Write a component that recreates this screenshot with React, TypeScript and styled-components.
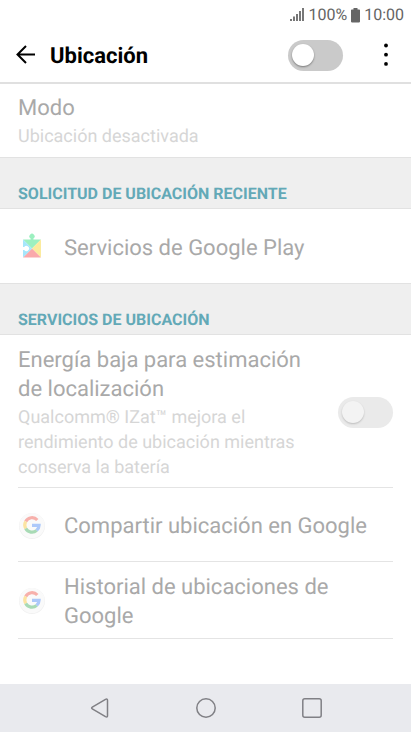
import React from "react";
import styled, { createGlobalStyle } from "styled-components";

const GlobalStyle = createGlobalStyle`
  *, *::before { box-sizing: border-box; }
  body {
    margin: 0;
    background: #fff;
    font-family: Roboto, sans-serif;
    text-rendering: geometricPrecision;
  }
`;

const Screen = styled.div`
  display: flex;
  flex-direction: column;
  min-height: 100vh;
`;

const StatusBar = styled.div`
  display: flex;
  align-items: center;
  justify-content: flex-end;
  gap: 4px;
  height: 28px;
  padding: 2px 7px 0 0;
  font-size: 16px;
  line-height: 26px;
  color: #646464;
`;

const Header = styled.header`
  display: flex;
  align-items: center;
  height: 56px;
  padding: 0 13px;
  border-bottom: 2px solid #e0e0e0;
`;

const IconButton = styled.button`
  display: flex;
  padding: 0;
  border: 0;
  background: none;
  color: ${(p) => p.color ?? "#000"};
`;

const Title = styled.h1`
  flex: 1;
  margin: 0 0 0 13px;
  padding-top: 4px;
  font-size: 22px;
  line-height: 28px;
  font-weight: 700;
  color: #000;
`;

const Switch = styled.input.attrs({ type: "checkbox", role: "switch" })`
  appearance: none;
  display: flex;
  flex: none;
  align-items: center;
  width: 55px;
  height: 31px;
  margin: 0;
  padding: 0 4px;
  border-radius: 16px;
  background: #cacaca;

  &::before {
    content: "";
    width: 22px;
    height: 22px;
    border-radius: 50%;
    background: #fff;
    box-shadow: 0 1px 2px rgba(0, 0, 0, 0.4);
  }

  &:checked {
    justify-content: flex-end;
  }

  &:disabled {
    background: #eaeaea;
  }

  &:disabled::before {
    background: #f3f3f3;
    box-shadow: 0 1px 2px rgba(0, 0, 0, 0.2);
  }
`;

const MenuButton = styled(IconButton)`
  margin-left: 31px;
`;

const SectionTitle = styled.h2`
  margin: 0;
  padding: 24px 18px 3px;
  border: solid #e2e2e2;
  border-width: 1px 0;
  background: #efefef;
  font-size: 16px;
  line-height: 23px;
  font-weight: 700;
  color: #63a9b7;
`;

const List = styled.div`
  padding: 0 18px;
`;

const Row = styled.div<{ $divided?: boolean; $compact?: boolean }>`
  display: flex;
  align-items: center;
  min-height: ${(p) => (p.$compact ? "0" : "74px")};
  padding: ${(p) => (p.$compact ? "8px 0" : "9px 0 7px")};
  border-bottom: ${(p) => (p.$divided ? "1px solid #e4e4e4" : "0")};
`;

const RowIcon = styled.span`
  display: flex;
  flex: none;
  width: 46px;
`;

const RowText = styled.div`
  flex: 1;
  min-width: 0;
  padding-top: 2px;
`;

const RowLabel = styled.label`
  display: block;
  font-size: 22px;
  line-height: 29px;
  color: #a9a9a9;
`;

const RowDetail = styled.div`
  margin-top: 1px;
  font-size: 18px;
  line-height: 25px;
  color: #d6d6d6;
`;

const RowSwitch = styled(Switch)`
  margin-left: 24px;
`;

const NavBar = styled.nav`
  display: flex;
  align-items: center;
  justify-content: center;
  gap: 82px;
  height: 48px;
  margin-top: auto;
  background: #e9eaee;
`;

const SignalIcon = () => (
  <svg width="14" height="14" viewBox="0 0 14 14" fill="#777" aria-hidden="true">
    <path d="M0 11h2v2H0zM3 8.500h2V13H3zM6 6h2v7H6zM9 3h2v10H9zM12 0h2v13h-2z" />
  </svg>
);

const BatteryIcon = () => (
  <svg width="9" height="15" viewBox="0 0 9 15" fill="#666" aria-hidden="true">
    <path d="M2.500 0h4v1.400h1.700a.8.8 0 0 1 .8.8v11.400a.8.8 0 0 1-.8.8H.8a.8.8 0 0 1-.8-.8V2.200a.8.8 0 0 1 .8-.8h1.700z" />
  </svg>
);

const BackArrow = () => (
  <svg width="24" height="24" viewBox="0 0 24 24" fill="none" stroke="currentColor" strokeWidth="2" aria-hidden="true">
    <path d="M22 11.500H5M13 3L4.500 11.500l8.500 8.500" />
  </svg>
);

const Dots = () => (
  <svg width="24" height="24" viewBox="0 0 24 24" fill="currentColor" aria-hidden="true">
    <circle cx="12" cy="2.500" r="1.900" />
    <circle cx="12" cy="11.700" r="1.900" />
    <circle cx="12" cy="20.900" r="1.900" />
  </svg>
);

const PlayServicesIcon = () => (
  <svg width="28" height="28" viewBox="0 0 28 28" aria-hidden="true">
    <path fill="#9cf0c0" d="M5 6.500h7.600V5.600a2.600 2.600 0 1 1 2.800 0v.9H23l-9 9z" />
    <path fill="#fbeb9e" d="M23 6.500v18l-9-9z" />
    <path fill="#faa9ab" d="M23 24.500H5l9-9z" />
    <path fill="#a5e6fb" d="M5 6.500l9 9-9 9v-7.600h1.200a2.600 2.600 0 1 0 0-2.800H5z" />
  </svg>
);

const GoogleIcon = () => (
  <svg width="28" height="28" viewBox="0 0 28 28" fill="none" strokeWidth="3.200" aria-hidden="true">
    <circle cx="14" cy="14" r="13" fill="#f1f1f1" />
    <circle cx="14" cy="13.500" r="12.600" fill="#fafafa" />
    <g transform="translate(0 -1)">
      <path stroke="#f7b0ab" d="M19.300 9A7.200 7.200 0 0 0 7.700 10.500" />
      <path stroke="#fce4a2" d="M7.700 10.500a7.200 7.200 0 0 0 0 7" />
      <path stroke="#a8dab5" d="M7.700 17.500a7.200 7.200 0 0 0 11 1.900" />
      <path stroke="#adc9fa" d="M18.700 19.400a7.200 7.200 0 0 0 2.400-5.100H14" />
    </g>
  </svg>
);

const NavIcon = ({ children }: { children: React.ReactNode }) => (
  <svg width="24" height="24" viewBox="0 0 24 24" fill="none" stroke="currentColor" strokeWidth="1.500" strokeLinejoin="round" aria-hidden="true">
    {children}
  </svg>
);

export default function App() {
  return (
    <Screen>
      <GlobalStyle />
      <StatusBar>
        <SignalIcon />
        <span>100%</span>
        <BatteryIcon />
        <span>10:00</span>
      </StatusBar>
      <Header>
        <IconButton aria-label="Atrás">
          <BackArrow />
        </IconButton>
        <Title id="title">Ubicación</Title>
        <Switch aria-labelledby="title" />
        <MenuButton aria-label="Más opciones">
          <Dots />
        </MenuButton>
      </Header>
      <main>
        <List>
          <Row $compact>
            <RowText>
              <RowLabel as="div">Modo</RowLabel>
              <RowDetail>Ubicación desactivada</RowDetail>
            </RowText>
          </Row>
        </List>
        <SectionTitle>SOLICITUD DE UBICACIÓN RECIENTE</SectionTitle>
        <List>
          <Row>
            <RowIcon>
              <PlayServicesIcon />
            </RowIcon>
            <RowText>
              <RowLabel as="div">Servicios de Google Play</RowLabel>
            </RowText>
          </Row>
        </List>
        <SectionTitle>SERVICIOS DE UBICACIÓN</SectionTitle>
        <List>
          <Row $divided>
            <RowText>
              <RowLabel htmlFor="low-energy">Energía baja para estimación de localización</RowLabel>
              <RowDetail>Qualcomm® IZat™ mejora el rendimiento de ubicación mientras conserva la batería</RowDetail>
            </RowText>
            <RowSwitch id="low-energy" disabled />
          </Row>
          <Row $divided>
            <RowIcon>
              <GoogleIcon />
            </RowIcon>
            <RowText>
              <RowLabel as="div">Compartir ubicación en Google</RowLabel>
            </RowText>
          </Row>
          <Row $divided>
            <RowIcon>
              <GoogleIcon />
            </RowIcon>
            <RowText>
              <RowLabel as="div">Historial de ubicaciones de Google</RowLabel>
            </RowText>
          </Row>
        </List>
      </main>
      <NavBar>
        <IconButton color="#808085" aria-label="Volver">
          <NavIcon>
            <path d="M4.300 11.200L17.500 3.300q2-1 2 1v15.400q0 2-2 1L4.300 12.800q-1.300-.8 0-1.600z" />
          </NavIcon>
        </IconButton>
        <IconButton color="#808085" aria-label="Inicio">
          <NavIcon>
            <circle cx="12" cy="12" r="9.200" />
          </NavIcon>
        </IconButton>
        <IconButton color="#808085" aria-label="Recientes">
          <NavIcon>
            <rect x="2.800" y="2.800" width="18.400" height="18.400" rx="2" />
          </NavIcon>
        </IconButton>
      </NavBar>
    </Screen>
  );
}
